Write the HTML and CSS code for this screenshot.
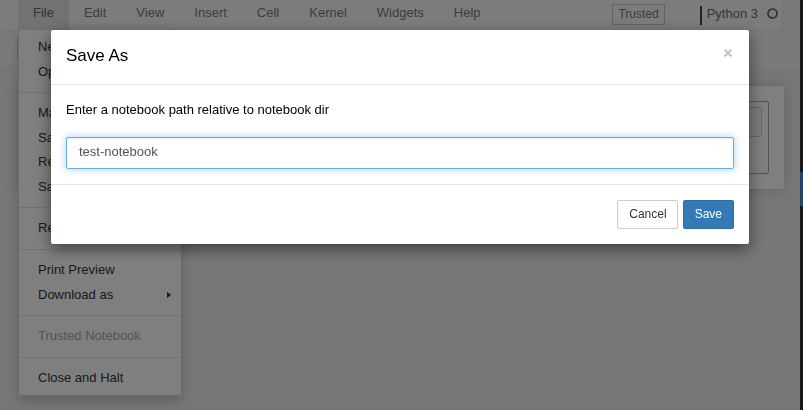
FILE: index.html
```html
<!DOCTYPE html>
<html lang="en">
<head>
<meta charset="utf-8">
<title>Save As</title>
<link rel="stylesheet" href="styles.css">
</head>
<body>
<div class="app">
  <div class="page">
    <header class="header">
      <div class="menubar">
        <nav class="menus">
          <span class="menu active">File</span>
          <span class="menu">Edit</span>
          <span class="menu">View</span>
          <span class="menu">Insert</span>
          <span class="menu">Cell</span>
          <span class="menu">Kernel</span>
          <span class="menu">Widgets</span>
          <span class="menu">Help</span>
        </nav>
        <span class="trusted">Trusted</span>
        <div class="kernel">
          <span class="kernel-name">Python 3</span>
          <svg class="kernel-dot" width="11" height="11" viewBox="0 0 11 11"><circle cx="5.5" cy="5.5" r="4.5" fill="none" stroke="#5e5e5e" stroke-width="1.7"/></svg>
        </div>
      </div>
      <div class="toolbar"><div class="btn-group"></div></div>
    </header>
    <main class="site">
      <div class="nb-container">
        <div class="cell"><div class="input-area"></div></div>
      </div>
    </main>
  </div>
  <aside class="side"><div class="side-mark"></div></aside>
</div>

<ul class="dropdown">
  <li class="item">New Notebook</li>
  <li class="item">Open...</li>
  <li class="divider"></li>
  <li class="item">Make a Copy...</li>
  <li class="item">Save as...</li>
  <li class="item">Rename...</li>
  <li class="item">Save and Checkpoint</li>
  <li class="divider"></li>
  <li class="item">Revert to Checkpoint</li>
  <li class="divider"></li>
  <li class="item">Print Preview</li>
  <li class="item submenu">Download as</li>
  <li class="divider"></li>
  <li class="item disabled">Trusted Notebook</li>
  <li class="divider"></li>
  <li class="item">Close and Halt</li>
</ul>

<div class="backdrop"></div>

<div class="modal">
  <div class="modal-header">
    <h4 class="modal-title">Save As</h4>
    <svg class="close" width="8" height="8" viewBox="0 0 8 8"><path d="M0.5 0.5 L7.5 7.5 M7.5 0.5 L0.5 7.5" stroke="#c6c6c6" stroke-width="2.2"/></svg>
  </div>
  <div class="modal-body">
    <p class="prompt">Enter a notebook path relative to notebook dir</p>
    <input class="path-input" type="text" value="test-notebook">
  </div>
  <div class="modal-footer">
    <button class="btn btn-default">Cancel</button>
    <button class="btn btn-primary">Save</button>
  </div>
</div>
</body>
</html>
```

FILE: styles.css
```css
* { box-sizing: border-box; }

html, body {
  margin: 0;
  padding: 0;
  height: 100%;
}

body {
  font-family: "Liberation Sans", Arial, sans-serif;
  font-size: 13px;
  line-height: 1.42857;
  color: #333;
  background: #eee;
  overflow: hidden;
}

.app {
  display: flex;
  height: 410px;
}

.page {
  flex: 1;
  display: flex;
  flex-direction: column;
  background: #eee;
}

.side {
  width: 3px;
  background: #333;
  padding-top: 172px;
}

.side-mark {
  height: 34px;
  background: #3a8ee6;
}

/* header */
.header {
  height: 66px;
  background: #f4f4f4;
}

.menubar {
  display: flex;
  align-items: flex-start;
  height: 31px;
  margin-right: 17px;
  padding-left: 18px;
  padding-right: 4px;
  background: #f9f9f9;
  border-right: 1px solid #e4e4e4;
  border-bottom: 1px solid #e4e4e4;
}

.menus {
  display: flex;
}

.menu {
  height: 30px;
  padding: 4px 15px 0;
  color: #7a7a7a;
}

.menu.active {
  background: #e4e4e4;
  color: #6a6a6a;
}

.trusted {
  margin-left: auto;
  margin-top: 4px;
  padding: 2px 5px;
  font-size: 12px;
  line-height: 15px;
  color: #777;
  border: 1px solid #c2c2c2;
}

.kernel {
  display: flex;
  align-items: flex-start;
  margin-left: 35px;
  margin-top: 6px;
  height: 19px;
  padding-left: 5px;
  border-left: 2px solid #4a4a4a;
}

.kernel-name {
  line-height: 15px;
  color: #6a6a6a;
}

.kernel-dot {
  margin-left: 9px;
  margin-top: 2px;
}

.toolbar {
  padding: 6px 0 0 17px;
}

.btn-group {
  width: 160px;
  height: 23px;
  border: 1px solid #ccc;
  border-radius: 2px;
  background: #fff;
}

/* notebook */
.site {
  flex: 1;
  padding-top: 20px;
}

.nb-container {
  margin: 0 16px 0 18px;
  padding: 15px;
  background: #fff;
  box-shadow: 0 0 12px 1px rgba(87, 87, 87, 0.2);
}

.cell {
  height: 73px;
  padding: 5px 6px 0 0;
  border: 1px solid #ababab;
  border-radius: 2px;
}

.input-area {
  height: 30px;
  border: 1px solid #cfcfcf;
  border-radius: 2px;
  background: #f7f7f7;
}

/* dropdown */
.dropdown {
  position: absolute;
  left: 18px;
  top: 30px;
  width: 164px;
  margin: 0;
  padding: 5px 0;
  list-style: none;
  background: #fff;
  border: 1px solid rgba(0, 0, 0, 0.15);
  border-top: 0;
  border-radius: 0 0 2px 2px;
  box-shadow: 0 6px 12px rgba(0, 0, 0, 0.175);
}

.dropdown .item {
  position: relative;
  padding: 3px 19px;
  color: #333;
  white-space: nowrap;
}

.dropdown .item.disabled {
  color: #aaa;
}

.dropdown .submenu::after {
  content: "";
  position: absolute;
  right: 10px;
  top: 9px;
  border-left: 4px solid #333;
  border-top: 3.5px solid transparent;
  border-bottom: 3.5px solid transparent;
}

.dropdown .divider {
  height: 1px;
  margin: 8px 0;
  background: #e5e5e5;
}

/* backdrop + modal */
.backdrop {
  position: fixed;
  inset: 0;
  background: rgba(0, 0, 0, 0.5);
}

.modal {
  position: fixed;
  left: 51px;
  top: 30px;
  width: 698px;
  background: #fff;
  border-radius: 2px;
  box-shadow: 0 5px 15px rgba(0, 0, 0, 0.5);
}

.modal-header {
  display: flex;
  justify-content: space-between;
  align-items: flex-start;
  padding: 15px 15px 18px;
  border-bottom: 1px solid #e5e5e5;
}

.modal-title {
  margin: 0;
  font-size: 17px;
  font-weight: normal;
  line-height: 21px;
  color: #000;
}

.close {
  margin-top: 4px;
  margin-right: 2px;
}

.modal-body {
  padding: 15px;
}

.prompt {
  margin: 0 0 18px;
  line-height: 19px;
  color: #000;
}

.path-input {
  display: block;
  width: 100%;
  height: 32px;
  margin: 0;
  padding: 0 12px 3px;
  font-family: "Liberation Sans", Arial, sans-serif;
  font-size: 13px;
  color: #555;
  background: #fff;
  border: 1px solid #66afe9;
  border-radius: 2px;
  outline: 0;
  box-shadow: inset 0 1px 1px rgba(0, 0, 0, 0.075), 0 0 8px rgba(102, 175, 233, 0.6);
}

.modal-footer {
  display: flex;
  justify-content: flex-end;
  gap: 5px;
  padding: 15px;
  border-top: 1px solid #e5e5e5;
}

.btn {
  height: 29px;
  margin: 0;
  padding: 0 11px;
  font-family: "Liberation Sans", Arial, sans-serif;
  font-size: 12px;
  line-height: 27px;
  border: 1px solid transparent;
  border-radius: 2px;
}

.btn-default {
  padding: 0 10px 0 11px;
  color: #333;
  background: #fff;
  border-color: #ccc;
}

.btn-primary {
  color: #fff;
  background: #337ab7;
  border-color: #2e6da4;
}
```
